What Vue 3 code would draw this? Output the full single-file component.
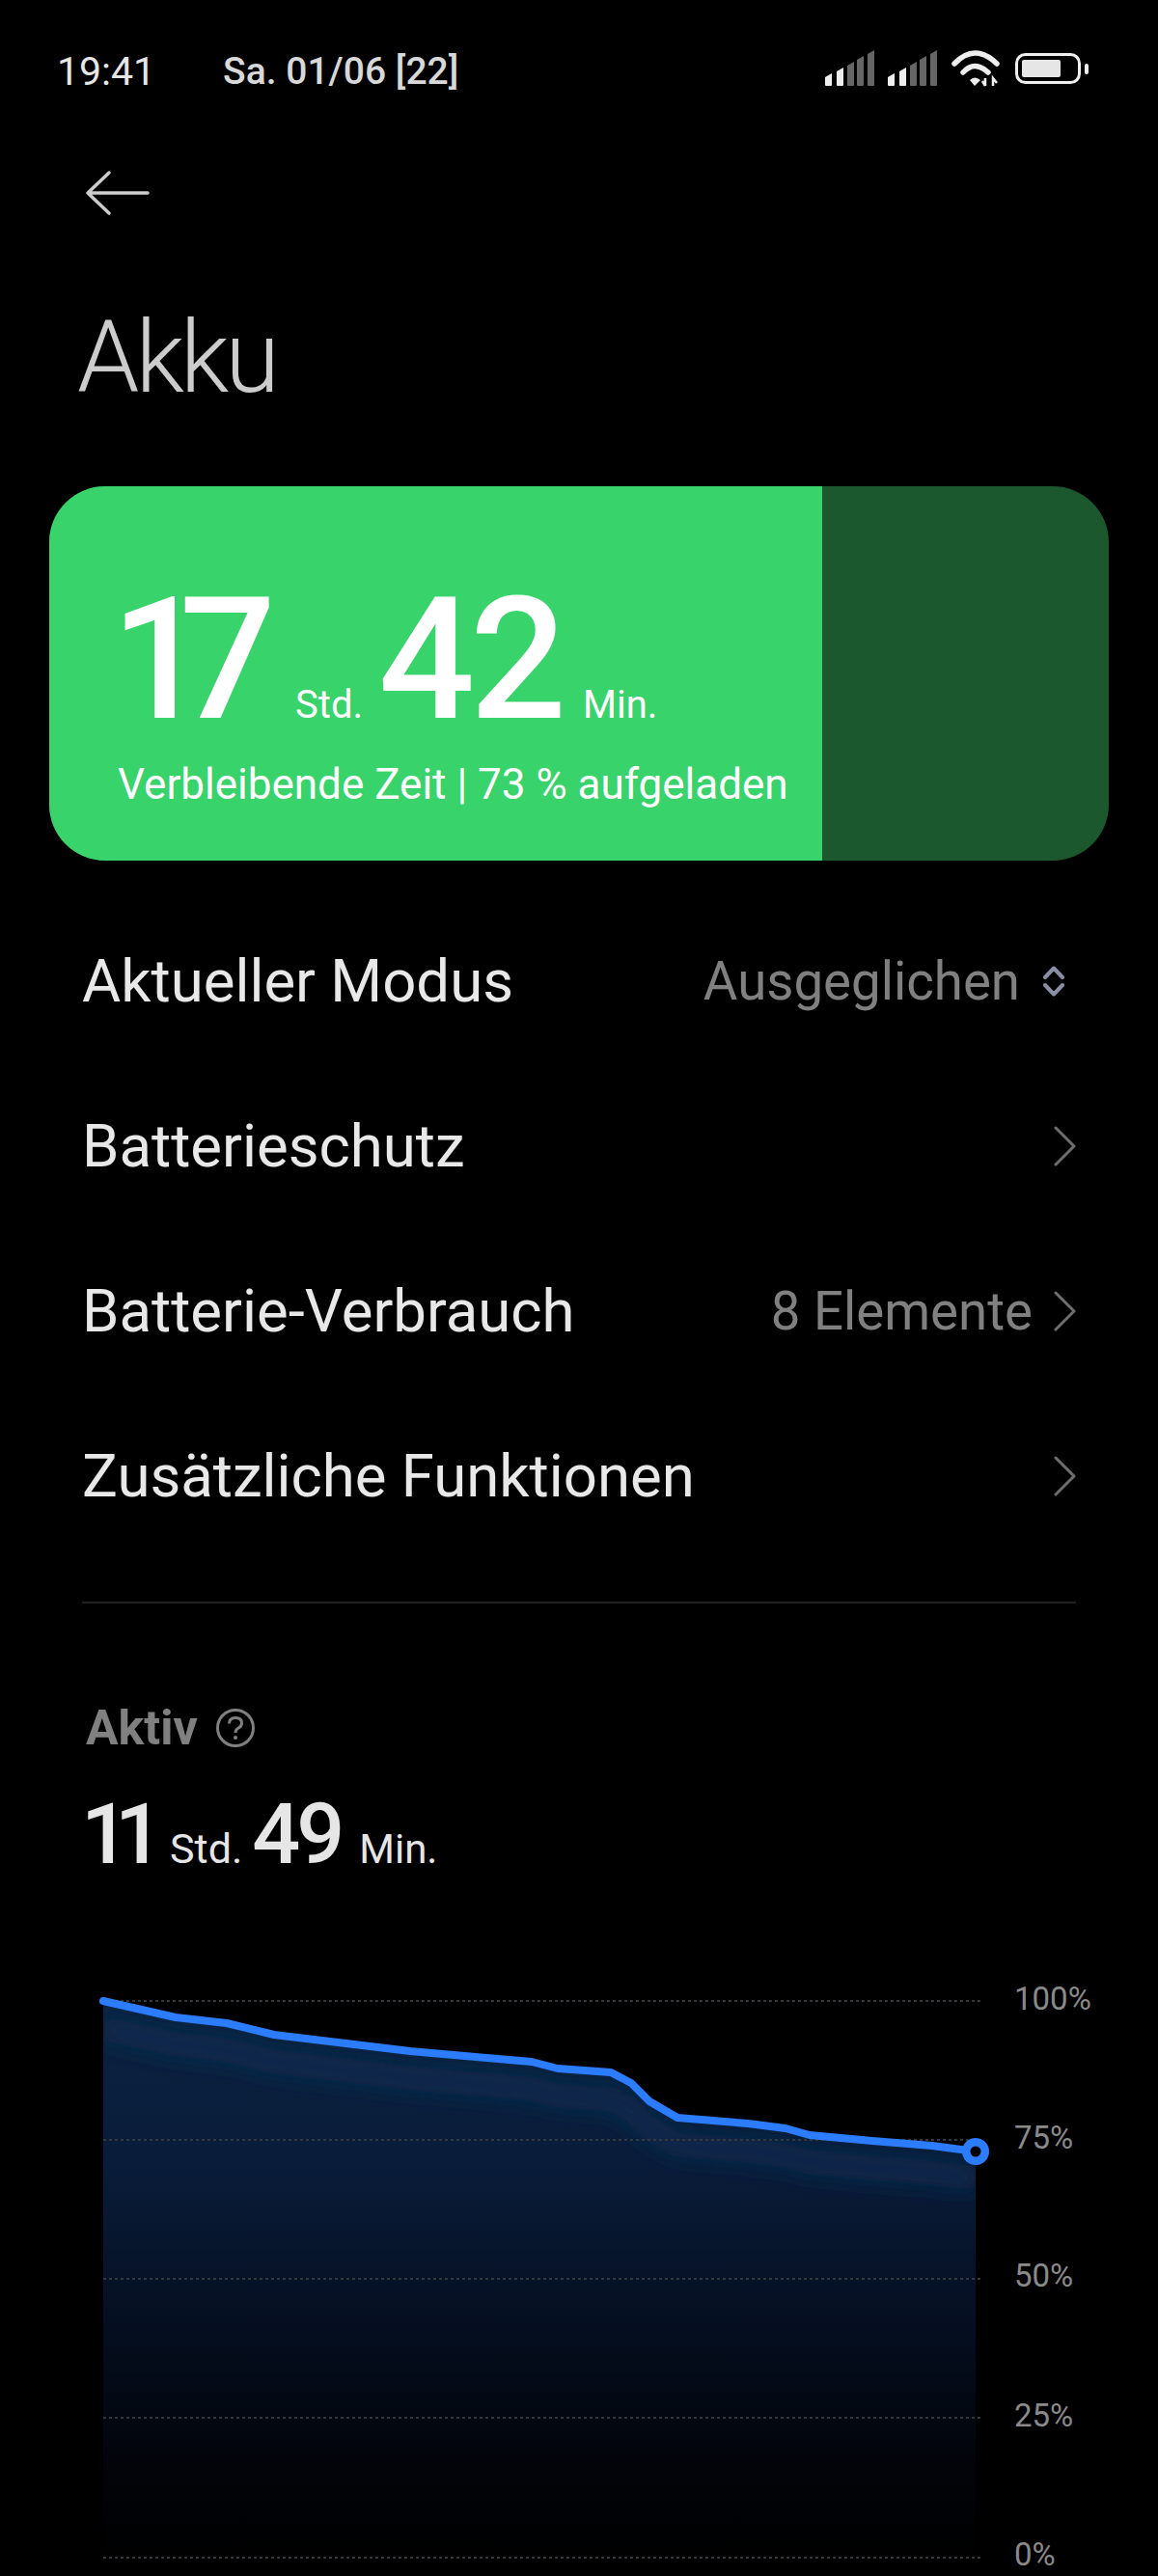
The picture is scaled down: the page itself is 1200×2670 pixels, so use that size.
<script setup>
const rows = [
  { label: 'Aktueller Modus', value: 'Ausgeglichen', icon: 'updown' },
  { label: 'Batterieschutz', value: '', icon: 'chevron' },
  { label: 'Batterie-Verbrauch', value: '8 Elemente', icon: 'chevron' },
  { label: 'Zusätzliche Funktionen', value: '', icon: 'chevron' },
]

const bars = [
  { x: 0, top: 16, on: true },
  { x: 12, top: 10, on: true },
  { x: 23, top: 4, on: false },
  { x: 33, top: -2, on: false },
  { x: 44, top: -8, on: false },
]

// chart coords are relative to the svg box, which starts at y = 2040
const points = [
  [107, 33], [182, 50], [235, 56], [284, 68], [425, 85], [551, 96], [578, 103],
  [633, 107], [654, 118], [673, 137], [702, 154], [775, 160], [814, 165],
  [839, 172], [904, 178], [966, 183], [1011, 189],
]
const linePath = 'M' + points.map((p) => p.join(' ')).join(' L')
const areaPath = linePath + ' L1011 610 L107 610 Z'
const grid = [
  { y: 33, label: '100%', base: 42 },
  { y: 177, label: '75%', base: 186 },
  { y: 321, label: '50%', base: 329 },
  { y: 465, label: '25%', base: 474 },
  { y: 610, label: '0%', base: 618 },
]
</script>

<template>
  <div class="page">
    <div class="status">
      <span class="time">19:41</span>
      <span class="date">Sa. 01/06 [22]</span>
      <svg class="status-icons" width="280" height="48" viewBox="0 0 280 48">
        <g v-for="off in [0, 65]" :key="off" :transform="`translate(${off} 0)`">
          <path
            v-for="b in bars"
            :key="b.x"
            :d="`M${b.x} ${b.top + 14} L${b.x + 7} ${b.top + 10} V38 Q${b.x + 7} 39 ${b.x + 6} 39 H${b.x + 1} Q${b.x} 39 ${b.x} 38 Z`"
            :fill="b.on ? '#eeeeee' : '#666666'"
          />
        </g>
        <path d="M134 16 Q155 -6 178 16" fill="none" stroke="#eee" stroke-width="5.5" stroke-linecap="round" />
        <path d="M143 25 Q155 12 169 25" fill="none" stroke="#eee" stroke-width="5.5" stroke-linecap="round" />
        <path d="M150 33 L155 39 L161 33 Q155 28 150 33 Z" fill="#eee" />
        <path d="M166 31 V39 M163 34 L166 39 M174 39 V31 L178 36" fill="none" stroke="#eee" stroke-width="2.5" />
        <rect x="198.5" y="6.5" width="65" height="29" rx="9" fill="none" stroke="#eee" stroke-width="3" />
        <rect x="204" y="12" width="40" height="18" rx="2" fill="#e6e6e6" />
        <rect x="269" y="16" width="4" height="11" rx="2" fill="#eee" />
      </svg>
    </div>

    <div class="back">
      <svg width="70" height="50" viewBox="0 0 70 50">
        <path d="M66 25 H4 M26 4 L4 25 L26 46" fill="none" stroke="#cccccc" stroke-width="3.5" stroke-linecap="round" stroke-linejoin="round" />
      </svg>
    </div>

    <h1 class="title">Akku</h1>

    <section class="card">
      <div class="card-fill">
        <div class="card-time">
          <span class="big first">17</span>
          <span class="unit std">Std.</span>
          <span class="big">42</span>
          <span class="unit min">Min.</span>
        </div>
        <div class="card-sub">Verbleibende Zeit | 73 % aufgeladen</div>
      </div>
    </section>

    <div class="rows">
      <div v-for="row in rows" :key="row.label" class="row">
        <span class="row-label">{{ row.label }}</span>
        <span v-if="row.value" class="row-value">{{ row.value }}</span>
        <svg v-if="row.icon === 'updown'" class="updown" width="22" height="32" viewBox="0 0 22 32">
          <path d="M2 12 L11 2.5 L20 12 M2 20 L11 29.5 L20 20" fill="none" stroke="#8a8fa8" stroke-width="4" stroke-linecap="round" stroke-linejoin="round" />
        </svg>
        <svg v-else class="chevron" width="23" height="42" viewBox="0 0 23 42">
          <path d="M2 2 L21 21 L2 40" fill="none" stroke="#6e6e6e" stroke-width="3" stroke-linecap="round" stroke-linejoin="round" />
        </svg>
      </div>
    </div>

    <div class="divider"></div>

    <div class="aktiv">
      <span>Aktiv</span>
      <svg width="42" height="42" viewBox="0 0 42 42">
        <circle cx="21" cy="21" r="18.5" fill="none" stroke="#808080" stroke-width="3" />
        <path d="M14.5 16.5 Q14.5 10.5 21 10.5 Q27.5 10.5 27.5 16 Q27.5 19.5 23.5 21.5 Q21 23 21 26" fill="none" stroke="#808080" stroke-width="3" />
        <circle cx="21" cy="31" r="2" fill="#808080" />
      </svg>
    </div>

    <div class="active-time">
      <span class="num n11">11</span>
      <span class="sm s1">Std.</span>
      <span class="num n49">49</span>
      <span class="sm s2">Min.</span>
    </div>

    <svg class="chart" width="1200" height="630" viewBox="0 0 1200 630">
      <defs>
        <linearGradient id="areaFill" x1="0" y1="33" x2="0" y2="610" gradientUnits="userSpaceOnUse">
          <stop offset="0" stop-color="#0b2341" />
          <stop offset="0.3" stop-color="#091c39" />
          <stop offset="0.55" stop-color="#051023" />
          <stop offset="0.8" stop-color="#02050c" />
          <stop offset="1" stop-color="#000000" />
        </linearGradient>
        <filter id="soft" x="-10%" y="-50%" width="120%" height="200%">
          <feGaussianBlur stdDeviation="11" />
        </filter>
        <clipPath id="areaClip">
          <path :d="areaPath" />
        </clipPath>
      </defs>

      <path :d="areaPath" fill="url(#areaFill)" />
      <g clip-path="url(#areaClip)">
        <path :d="linePath" fill="none" stroke="#0f2c50" stroke-width="24" filter="url(#soft)" transform="translate(0 28)" />
      </g>

      <g v-for="g in grid" :key="g.label">
        <line x1="107" :y1="g.y" x2="1016" :y2="g.y" stroke="#34373b" stroke-width="2" stroke-dasharray="3 3" />
        <text x="1051" :y="g.base" class="axis">{{ g.label }}</text>
      </g>

      <path :d="linePath" fill="none" stroke="#2b7cff" stroke-width="8" stroke-linecap="round" stroke-linejoin="round" />
      <circle cx="1011" cy="189" r="9.75" fill="#000" stroke="#2b7cff" stroke-width="8.5" />
    </svg>
  </div>
</template>

<style scoped>
.page {
  width: 1200px;
  height: 2670px;
  background: #000;
  color: #fff;
  font-family: Roboto, "Liberation Sans", sans-serif;
  overflow: hidden;
}

.status {
  height: 148px;
  display: flex;
  align-items: center;
  position: relative;
}
.time {
  margin-left: 59px;
  font-size: 41px;
  color: #e6e6e6;
}
.date {
  margin-left: 70px;
  font-size: 39px;
  font-weight: 500;
  color: #d8d8d8;
}
.status-icons {
  position: absolute;
  left: 855px;
  top: 50px;
}

.back {
  height: 104px;
  padding-left: 87px;
  display: flex;
  align-items: flex-start;
  padding-top: 27px;
  box-sizing: border-box;
}

.title {
  margin: 0 0 0 80px;
  height: 252px;
  font-size: 103px;
  font-weight: 300;
  line-height: 238px;
  letter-spacing: -4px;
  color: #cccccc;
}

.card {
  margin: 0 51px;
  height: 388px;
  border-radius: 58px;
  background: #1b582d;
  overflow: hidden;
}
.card-fill {
  width: 801px;
  height: 100%;
  background: #38d36a;
  box-sizing: border-box;
  padding: 96px 0 0 71px;
}
.card-time {
  display: flex;
  align-items: baseline;
  height: 168px;
}
.big {
  font-size: 176px;
  font-weight: 500;
  line-height: 168px;
  letter-spacing: -5px;
}
.big.first {
  margin-left: -7px;
  letter-spacing: -29px;
}
.unit {
  font-size: 40px;
}
.std {
  margin: 0 16px 0 49px;
}
.min {
  margin-left: 22px;
}
.card-sub {
  margin-top: 20px;
  font-size: 44px;
  line-height: 50px;
}

.rows {
  margin-top: 39px;
}
.row {
  height: 171px;
  margin: 0 85px;
  display: flex;
  align-items: center;
  font-size: 61.7px;
}
.row-label {
  color: #e8e8e8;
  flex: 1;
}
.row-value {
  color: #808080;
  font-size: 54.6px;
}
.updown {
  margin-left: 24px;
  margin-right: 12px;
}
.chevron {
  margin-left: 22px;
}

.divider {
  height: 2px;
  margin: 45px 85px 0;
  background: #222222;
}

.aktiv {
  margin: 99px 0 0 89px;
  display: flex;
  align-items: center;
  gap: 18px;
  height: 60px;
  font-size: 50px;
  font-weight: 700;
  color: #808080;
}

.active-time {
  margin: 35px 0 0 84px;
  display: flex;
  align-items: baseline;
  height: 90px;
  color: #e6e6e6;
}
.num {
  font-size: 88px;
  font-weight: 500;
  line-height: 90px;
}
.n11 {
  letter-spacing: -15px;
}
.n49 {
  letter-spacing: -4px;
}
.sm {
  font-size: 43px;
}
.s1 {
  margin: 0 10px 0 22px;
}
.s2 {
  margin-left: 19px;
  font-size: 42px;
}

.chart {
  display: block;
  margin-top: 95px;
}
.axis {
  font-size: 33px;
  fill: #8a8a8a;
}
</style>

<style>
html, body {
  background: #000;
}
</style>
